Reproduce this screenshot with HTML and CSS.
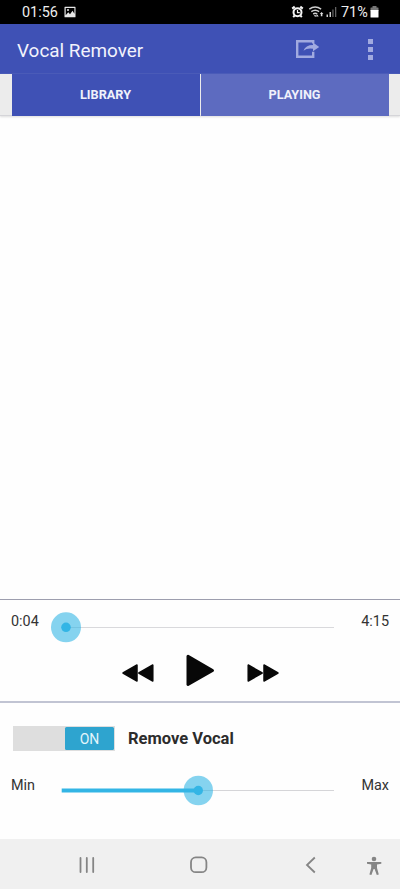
FILE: index.html
```html
<!DOCTYPE html>
<html lang="en">
<head>
<meta charset="utf-8">
<title>Vocal Remover</title>
<link rel="stylesheet" href="styles.css">
</head>
<body>
<div class="app">
  <div class="status">
    <span class="clock">01:56</span>
    <svg class="photo" width="12" height="12" viewBox="0 0 12 12"><path fill="#e8e8e8" fill-rule="evenodd" d="M1 .7h10q.5 0 .5.5v9.600q0 .5-.5.5H1q-.5 0-.5-.5V1.200Q.5.700 1 .700zM1.700 2v7.200L4.300 6.300 6 8.200 8.500 4.800l1.900 2.900V2z"/><circle cx="4" cy="4" r="1" fill="#e8e8e8"/></svg>
    <span class="grow"></span>
    <svg width="80" height="24" viewBox="291 0 80 24" class="signals">
      <g fill="none" stroke="#f4f4f4">
        <circle cx="297.500" cy="12.300" r="4" stroke-width="2" fill="#000"/>
        <path stroke-width="2" d="M292.200 8.600l2.500-2M302.800 8.600l-2.500-2M294.500 15.600l-1.300 1.500M300.500 15.600l1.300 1.500"/>
        <path stroke-width="1.200" d="M297.500 10v2.600h2.300"/>
      </g>
      <g fill="none" stroke="#d0d0d0" stroke-width="1.500">
        <path d="M309.300 9.200q5.800-4.200 11.800 0M311.300 11.700q3.900-2.700 7.800 0M313.200 14q2-1.300 4 0"/>
      </g>
      <path fill="#e0e0e0" d="M313.800 15.200h2.800l-1.400 1.800zM317.300 14.500l1.400 2h-2.800zM321.600 12l1.800 2h-1v2.200h-1.600V14h-1z"/>
      <path fill="#d0d0d0" d="M326.500 14.500h1.500V17h-1.500zM329.500 12h1.500v5h-1.500z"/>
      <path fill="#626262" d="M332.300 9.500h1.300V17h-1.300zM335 7h1.300v10H335z"/>
    </svg>
    <span class="percent">71%</span>
    <svg class="battery" width="9" height="12" viewBox="0 0 9 12"><path fill="#777" d="M2.500 0h4v1.500H8q.5 0 .5.500v3H.5V2q0-.5.500-.5h1.500z"/><path fill="#fff" d="M.5 4h8v7q0 .5-.5.500H1q-.5 0-.5-.5z"/></svg>
  </div>
  <header class="bar">
    <h1>Vocal Remover</h1>
    <svg class="share" width="25" height="20" viewBox="0 0 25 20"><path fill="none" stroke="#a1aae0" stroke-width="2.400" d="M18.200 4.400V2.200H2.200v15.600h16v-5"/><path fill="#a1aae0" d="M8.500 11.800Q10.500 6 18 6V3.500l6.200 4.400-6.200 4.400V9.700q-6-1-9.500 2.100z"/></svg>
    <div class="more"><i></i><i></i><i></i></div>
  </header>
  <nav class="tabs"><span class="tab">LIBRARY</span><span class="tab playing">PLAYING</span></nav>
  <main class="library"></main>
  <section class="player">
    <div class="seek">
      <span class="label">0:04</span>
      <svg class="slider" width="290" height="32" viewBox="48 0 290 32"><path stroke="#d9d9dc" d="M66 16.500h268"/><circle cx="66" cy="16.300" r="15" fill="#33b5e5" fill-opacity=".6"/><circle cx="66" cy="16.300" r="4.800" fill="#33b5e5"/></svg>
      <span class="label end">4:15</span>
    </div>
    <div class="controls">
      <svg width="32" height="18" viewBox="0 0 32 18"><path d="M1 9L15 1v16zM16.800 9L30.800 1v16z"/></svg>
      <svg class="play" width="29" height="33" viewBox="0 0 29 33"><path d="M2 2.200L26.500 16.500 2 30.500z"/></svg>
      <svg width="32" height="18" viewBox="0 0 32 18"><path d="M31 9L17 1v16zM15.200 9L1.200 1v16z"/></svg>
    </div>
  </section>
  <section class="vocal">
    <div class="option">
      <div class="switch"><span>ON</span></div>
      <strong>Remove Vocal</strong>
    </div>
    <div class="seek amount">
      <span class="label">Min</span>
      <svg class="slider" width="290" height="32" viewBox="48 0 290 32"><path stroke="#d5d5d8" d="M198 16.500h136"/><path stroke="#33b5e5" stroke-width="4" d="M61.700 16.500H198"/><circle cx="198.300" cy="16.500" r="14.700" fill="#33b5e5" fill-opacity=".6"/><circle cx="198.300" cy="16.500" r="4.700" fill="#33b5e5"/></svg>
      <span class="label end">Max</span>
    </div>
  </section>
  <footer class="system">
    <svg width="400" height="50" viewBox="0 839 400 50">
      <g fill="none" stroke="#858585" stroke-width="1.800" stroke-linecap="round">
        <path d="M80.500 858v14M86.800 858v14M93.200 858v14"/>
        <rect x="191" y="857.400" width="15.400" height="14.800" rx="4.800"/>
        <path stroke-linecap="butt" d="M314.800 857.500l-7.800 7.500 7.800 7.500"/>
      </g>
      <circle cx="374" cy="859" r="2.300" fill="#858585"/>
      <path fill="#858585" d="M367 862h14.300v1.800l-4.300.6v3.600l1.800 6.500-2 .5-2.200-6h-1l-2.200 6-2-.5 1.800-6.500v-3.600l-4.200-.6z"/>
    </svg>
  </footer>
</div>
</body>
</html>
```

FILE: styles.css
```css
* { box-sizing: border-box; }
body { margin: 0; background: #fefefe; font-family: Roboto, "Liberation Sans", sans-serif; color: #333; }
svg { display: block; flex: none; }
.app { width: 400px; height: 889px; display: flex; flex-direction: column; }
.status { height: 24px; background: #000; color: #eee; display: flex; padding: 0 21px 0 22px; font-size: 14.4px; line-height: 25px; }
.clock { width: 36px; white-space: nowrap; }
.photo { margin: 6px 0 0 6px; }
.grow { flex: 1; }
.signals { margin-right: -30px; }
.percent { width: 29px; white-space: nowrap; }
.battery { margin-top: 6px; }
.bar { height: 50px; background: #3f51b5; display: flex; padding-left: 17px; }
h1 { margin: 0; width: 278px; font-size: 18.900px; font-weight: 400; line-height: 53px; color: #f2f3fc; }
.share { margin-top: 15px; }
.more { margin: 15px 0 0 48px; display: flex; flex-direction: column; gap: 3px; }
.more i { width: 5px; height: 5px; background: #a1aae0; }
.tabs { height: 42px; padding: 0 11px 0 12px; background: #ececec; border-bottom: 1px solid #d5d5d9; display: flex; gap: 1px; box-shadow: 0 1px 2px #ddd; }
.tab { flex: 1; height: 41.500px; background: #3f51b5; color: #f0f1fb; font-size: 12.700px; font-weight: 700; line-height: 42px; text-align: center; padding-right: 1px; }
.playing { background: #5d6bc0; }
.library { flex: 1; }
.player { height: 102px; border-top: 1px solid #9d9eae; padding: 11px 11px 0; }
.seek { display: flex; }
.label { width: 37px; font-size: 14.400px; line-height: 21px; white-space: nowrap; }
.end { flex: 1; text-align: right; }
.controls { display: flex; justify-content: center; align-items: center; gap: 32px; margin-top: 9px; height: 36px; }
.controls svg { fill: #080808; stroke: #080808; stroke-width: 1.500; stroke-linejoin: round; margin-top: 5px; }
.controls .play { stroke-width: 3; margin-top: 0; }
.vocal { height: 138px; border-top: 2px solid #c1c4d3; padding: 23px 11px 0; }
.option { display: flex; padding-left: 2px; }
.switch { width: 102px; height: 25px; background: #dedede; padding: 1px 1px 1px 52px; }
.switch span { display: block; height: 23px; border-radius: 1.500px; background: #2ea4cf; color: #e4f5fb; text-align: center; font-size: 14px; line-height: 24px; }
.option strong { margin-left: 13px; font-size: 16.500px; line-height: 26px; white-space: nowrap; color: #2c2c2c; }
.amount { margin-top: 23px; }
.amount .slider { margin-top: -1px; }
.system { height: 50px; background: #f0f0f0; }
```
